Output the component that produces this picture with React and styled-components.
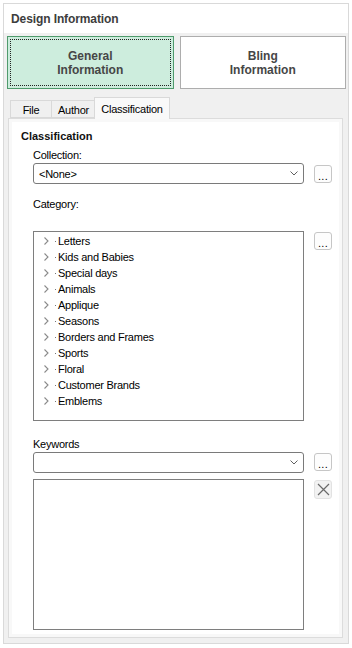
import React from 'react';
import styled, { createGlobalStyle } from 'styled-components';

const GlobalStyle = createGlobalStyle`
  body {
    margin: 0;
    background: #fff;
    font-family: "Liberation Sans", Arial, sans-serif;
  }
`;

const categories = [
  'Letters',
  'Kids and Babies',
  'Special days',
  'Animals',
  'Applique',
  'Seasons',
  'Borders and Frames',
  'Sports',
  'Floral',
  'Customer Brands',
  'Emblems',
];

const ChevronDown = () => (
  <svg width="8" height="5" viewBox="0 0 8 5">
    <polyline points="0.5,0.5 4,4 7.5,0.5" fill="none" stroke="#606060" strokeWidth="1" />
  </svg>
);

const ChevronRight = () => (
  <svg width="5" height="8" viewBox="0 0 5 8">
    <polyline points="0.5,0.5 4,4 0.5,7.5" fill="none" stroke="#8a8a8a" strokeWidth="1.1" />
  </svg>
);

const CloseIcon = () => (
  <svg width="13" height="13" viewBox="0 0 13 13">
    <path d="M1 1 L12 12 M12 1 L1 12" stroke="#6a6a6a" strokeWidth="1.2" fill="none" />
  </svg>
);

const App = () => {
  return (
    <>
      <GlobalStyle />
      <Frame>
        <Header>Design Information</Header>
        <Body>
          <ButtonRow>
            <ModeButton $active>
              <FocusRect>
                General
                <br />
                Information
              </FocusRect>
            </ModeButton>
            <ModeButton>
              <FocusRect $hidden>
                Bling
                <br />
                Information
              </FocusRect>
            </ModeButton>
          </ButtonRow>

          <TabArea>
            <TabStrip>
              <Tab $width={41}>File</Tab>
              <Tab $width={44}>Author</Tab>
              <Tab $width={76} $selected>Classification</Tab>
            </TabStrip>
            <Panel>
              <SectionTitle>Classification</SectionTitle>

              <Label $top={5}>Collection:</Label>
              <FieldRow $top={1}>
                <Combo>
                  <span>&lt;None&gt;</span>
                  <ChevronDown />
                </Combo>
                <DotsButton $offset={2}>...</DotsButton>
              </FieldRow>

              <Label $top={13}>Category:</Label>
              <FieldRow $top={20}>
                <TreeBox>
                  {categories.map((c) => (
                    <TreeItem key={c}>
                      <ChevronRight />
                      <TreeDot />
                      <span>{c}</span>
                    </TreeItem>
                  ))}
                </TreeBox>
                <DotsButton $offset={1}>...</DotsButton>
              </FieldRow>

              <Label $top={16}>Keywords</Label>
              <FieldRow $top={1}>
                <Combo>
                  <span />
                  <ChevronDown />
                </Combo>
                <DotsButton $offset={1}>...</DotsButton>
              </FieldRow>
              <FieldRow $top={6}>
                <ListBox />
                <IconButton>
                  <CloseIcon />
                </IconButton>
              </FieldRow>
            </Panel>
          </TabArea>
        </Body>
      </Frame>
    </>
  );
};

const Frame = styled.div`
  margin: 3px;
  width: 346px;
  height: 641px;
  box-sizing: border-box;
  border: 1px solid #d9d9d9;
  display: flex;
  flex-direction: column;
  background: #f0f0f0;
`;

const Header = styled.div`
  height: 29px;
  background: #fff;
  padding-left: 7px;
  display: flex;
  align-items: center;
  font-size: 12px;
  font-weight: bold;
  color: #3d3d3d;
  letter-spacing: -0.1px;
`;

const Body = styled.div`
  flex: 1;
  display: flex;
  flex-direction: column;
  padding: 3px 2px 0 3px;
`;

const ButtonRow = styled.div`
  display: flex;
  gap: 6px;
`;

const ModeButton = styled.div`
  flex: 1;
  height: 53px;
  box-sizing: border-box;
  padding: 2px;
  border: 1px solid ${(p) => (p.$active ? '#4f9a6c' : '#adadad')};
  background: ${(p) => (p.$active ? '#cdeddd' : '#fff')};
  display: flex;
`;

const FocusRect = styled.div`
  flex: 1;
  border: 1px dotted ${(p) => (p.$hidden ? 'transparent' : '#222')};
  display: flex;
  align-items: center;
  justify-content: center;
  text-align: center;
  font-size: 12px;
  font-weight: bold;
  line-height: 14px;
  color: #464646;
`;

const TabArea = styled.div`
  flex: 1;
  display: flex;
  flex-direction: column;
  margin: 8px 3px 5px 1px;
`;

const TabStrip = styled.div`
  display: flex;
  align-items: flex-end;
  height: 21px;
  padding-left: 2px;
  position: relative;
  z-index: 1;
`;

const Tab = styled.div`
  width: ${(p) => p.$width}px;
  height: ${(p) => (p.$selected ? 22 : 18)}px;
  box-sizing: border-box;
  margin-left: ${(p) => (p.$selected ? '-1px' : '0')};
  margin-bottom: ${(p) => (p.$selected ? '-1px' : '0')};
  border: 1px solid #d9d9d9;
  border-bottom: ${(p) => (p.$selected ? 'none' : '1px solid #d9d9d9')};
  border-right: ${(p) => (p.$selected ? '1px solid #d9d9d9' : 'none')};
  background: ${(p) => (p.$selected ? '#f9f9f9' : '#f0f0f0')};
  font-size: 11px;
  letter-spacing: -0.25px;
  color: #000;
  display: flex;
  align-items: center;
  justify-content: center;
  padding-top: ${(p) => (p.$selected ? '0' : '2px')};
`;

const Panel = styled.div`
  flex: 1;
  border: 1px solid #dcdcdc;
  background: #fff;
  box-shadow: inset 0 0 0 3px #f8f8f8;
  padding: 4px;
  display: flex;
  flex-direction: column;
`;

const SectionTitle = styled.div`
  margin-top: 6px;
  padding-left: 8px;
  font-size: 11px;
  line-height: 14px;
  font-weight: bold;
  color: #111;
`;

const Label = styled.div`
  margin-top: ${(p) => p.$top}px;
  padding-left: 20px;
  font-size: 11px;
  line-height: 14px;
  letter-spacing: -0.25px;
  color: #000;
`;

const FieldRow = styled.div`
  margin-top: ${(p) => p.$top}px;
  padding-left: 20px;
  display: grid;
  grid-template-columns: 271px 18px;
  column-gap: 10px;
  align-items: start;
`;

const Combo = styled.div`
  height: 21px;
  box-sizing: border-box;
  border: 1px solid #7a7a7a;
  border-radius: 3px;
  background: #fff;
  padding: 0 5px 0 5px;
  display: flex;
  align-items: center;
  justify-content: space-between;
  font-size: 11px;
  letter-spacing: -0.25px;
  color: #000;
`;

const DotsButton = styled.div`
  margin-top: ${(p) => p.$offset}px;
  height: 18px;
  box-sizing: border-box;
  border: 1px solid #c6c6c6;
  border-radius: 3px;
  background: #fdfdfd;
  font-size: 11px;
  line-height: 12px;
  color: #000;
  text-align: center;
  display: flex;
  align-items: flex-end;
  justify-content: center;
  letter-spacing: 0.3px;
`;

const IconButton = styled.div`
  margin-top: 1px;
  height: 19px;
  box-sizing: border-box;
  border: 1px solid #e2e2e2;
  border-radius: 3px;
  background: #f2f2f2;
  display: flex;
  align-items: center;
  justify-content: center;
`;

const TreeBox = styled.div`
  height: 190px;
  box-sizing: border-box;
  border: 1px solid #7e7e7e;
  background: #fff;
  padding-top: 1px;
`;

const TreeItem = styled.div`
  height: 16px;
  display: flex;
  align-items: center;
  padding-left: 10px;
  font-size: 11px;
  letter-spacing: -0.25px;
  color: #000;

  svg {
    margin-right: 6px;
  }
`;

const TreeDot = styled.span`
  width: 1px;
  height: 1px;
  background: #777;
  margin-right: 2px;
`;

const ListBox = styled.div`
  height: 151px;
  box-sizing: border-box;
  border: 1px solid #7e7e7e;
  background: #fff;
`;

export default App;
